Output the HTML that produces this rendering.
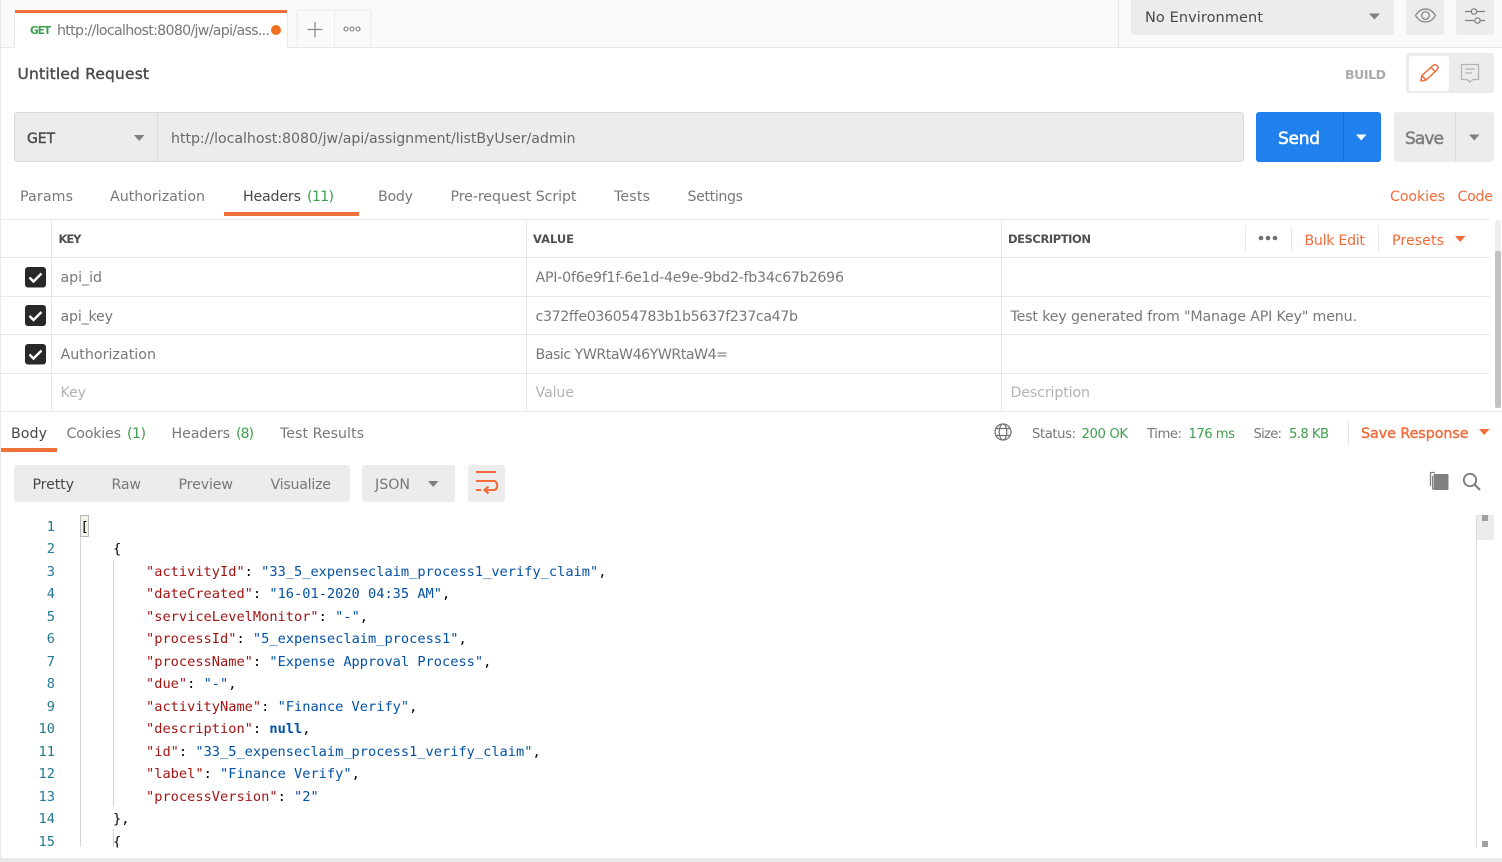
<!DOCTYPE html>
<html><head><meta charset="utf-8"><title>Untitled Request</title>
<style>
html,body{margin:0;padding:0;width:1502px;height:862px;overflow:hidden;background:#fff}
svg{display:block}
text{font-family:"DejaVu Sans","Liberation Sans",sans-serif;font-size:14.2px;fill:#787878;white-space:pre}
.d{fill:#484848}.o{fill:#f26b3a}.g{fill:#3f9f4f}.p{fill:#b3b3b3}
.s{stroke-width:.4px;stroke:currentColor}
.h{font-size:11.5px;font-weight:bold;fill:#505050}
.m{font-family:"DejaVu Sans Mono","Liberation Mono",monospace;font-size:13.67px;fill:#000}
.m tspan.k{fill:#a31515}.m tspan.v{fill:#0451a5}.m tspan.b{fill:#0451a5;font-weight:bold}
.n{font-family:"DejaVu Sans Mono","Liberation Mono",monospace;font-size:13.67px;fill:#237893;text-anchor:end}
.l{stroke:#e8e8e8;stroke-width:1;fill:none}
.ic{fill:none;stroke:#808080;stroke-width:1.2}
</style></head><body>
<svg width="1502" height="862" viewBox="0 0 1502 862" xmlns="http://www.w3.org/2000/svg">
<!-- top bar -->
<rect x="0" y="0" width="1502" height="47" fill="#fafafa"/>
<path class="l" d="M0 47.5H1502M0.5 0V858M1118.5 0V47"/>
<rect x="15" y="10" width="272" height="38" fill="#fff"/>
<rect x="15" y="10" width="272" height="3" fill="#f0703a"/>
<path class="l" d="M287.5 13V47M14.5 13V47"/>
<text x="30" y="34" textLength="21" style="font-size:10.5px;font-weight:bold;fill:#3f9f4f">GET</text>
<text x="57" y="35" textLength="213">http://localhost:8080/jw/api/ass...</text>
<circle cx="276" cy="30" r="5" fill="#f0701f"/>
<path d="M297 47V13a3 3 0 0 1 3-3H368a3 3 0 0 1 3 3V47" fill="#fafafa" stroke="#ececec"/>
<path d="M334.500 10V47" stroke="#ececec"/>
<path d="M307.500 29.500H322.500M315 22V37" stroke="#8a8a8a" stroke-width="1.300" fill="none"/>
<g fill="none" stroke="#808080" stroke-width="1.100"><circle cx="346" cy="29" r="2"/><circle cx="352" cy="29" r="2"/><circle cx="358" cy="29" r="2"/></g>
<rect x="1131" y="-4" width="263" height="39" rx="3" fill="#ececec"/>
<text x="1145" y="22" textLength="118" class="d" style="font-size:14.500px">No Environment</text>
<path d="M1369 13.500H1380L1374.500 19.500Z" fill="#808080"/>
<rect x="1406" y="-4" width="38" height="39" rx="3" fill="#ececec"/>
<rect x="1456" y="-4" width="38" height="39" rx="3" fill="#ececec"/>
<path class="ic" d="M1415.500 15.500C1418.500 10.500 1422 9 1425.500 9S1432.500 10.500 1435.500 15.500C1432.500 20.500 1429 22 1425.500 22S1418.500 20.500 1415.500 15.500Z"/>
<circle class="ic" cx="1425.500" cy="15.500" r="3.800"/>
<g class="ic"><path d="M1465 11.500H1471M1477 11.500H1485M1465 20.500H1474M1480 20.500H1485"/><circle cx="1474" cy="11.500" r="2.700"/><circle cx="1477.500" cy="20.500" r="2.700"/></g>
<!-- title -->
<text x="17.500" y="79" textLength="131.500" class="d s" style="font-size:15.500px;color:#505050">Untitled Request</text>
<text x="1345" y="79" textLength="41" style="font-size:12.500px;font-weight:bold;fill:#ababab">BUILD</text>
<rect x="1406" y="53" width="88" height="40" rx="3" fill="#ececec"/>
<rect x="1409" y="56" width="40" height="35" rx="3" fill="#fff"/>
<path d="M1421 81L1421.800 75.500L1433 65.500C1434.500 64 1436.500 65 1437.500 66.200C1438.300 67.400 1438.300 68.500 1437 70L1426 80ZM1431 67.500L1435.500 72M1421.800 75.500L1426 80" fill="none" stroke="#f26b3a" stroke-width="1.500" stroke-linejoin="round"/>
<path d="M1461.500 64.500H1478.500V79.500H1473L1470 82L1467 79.500H1461.500Z" fill="none" stroke="#b3b3b3" stroke-width="1.300"/>
<path d="M1465 69H1475M1465 73H1472" fill="none" stroke="#b3b3b3" stroke-width="1.200"/>
<!-- url bar -->
<rect x="14.500" y="112.500" width="1229" height="49" rx="3" fill="#ececec" stroke="#d9d9d9"/>
<path d="M157.500 113V161" stroke="#d9d9d9"/>
<text x="27" y="143" textLength="28" class="d s" style="color:#505050;font-size:14px">GET</text>
<path d="M134 135H144.500L139.200 141Z" fill="#808080"/>
<text x="171" y="143" textLength="404.500" style="fill:#686868">http://localhost:8080/jw/api/assignment/listByUser/admin</text>
<rect x="1256" y="112" width="125" height="50" rx="3" fill="#2080ee"/>
<path d="M1343.500 112V162" stroke="#1a70d4"/>
<text x="1278" y="144" textLength="42" style="font-size:17px;fill:#fff;stroke:#fff;stroke-width:.55px">Send</text>
<path d="M1356 134.500H1366.500L1361.200 140.500Z" fill="#fff"/>
<rect x="1394" y="112" width="100" height="50" rx="3" fill="#ececec"/>
<path d="M1455.500 112V162" stroke="#dcdcdc"/>
<text x="1405" y="144" textLength="39" style="font-size:17px;fill:#808080;stroke:#808080;stroke-width:.55px">Save</text>
<path d="M1469 134.500H1479.500L1474.200 140.500Z" fill="#808080"/>
<!-- request tabs -->
<text x="20" y="201" textLength="53">Params</text>
<text x="110" y="201" textLength="95">Authorization</text>
<text x="243" y="201" textLength="58" class="d">Headers</text>
<text x="307" y="201" textLength="27" class="g">(11)</text>
<text x="378" y="201" textLength="35">Body</text>
<text x="450.500" y="201" textLength="126">Pre-request Script</text>
<text x="614" y="201" textLength="36">Tests</text>
<text x="687.500" y="201" textLength="55.500">Settings</text>
<text x="1390" y="201" textLength="55" class="o">Cookies</text>
<text x="1457.500" y="201" textLength="35.500" class="o">Code</text>
<rect x="224" y="212" width="135" height="4" fill="#f0703a"/>
<!-- headers table -->
<path class="l" d="M0 219.500H1490M0 257.500H1490M0 296.500H1490M0 334.500H1490M0 373.500H1490M0 411.500H1502M51.500 220V411M526.500 220V411M1001.500 220V411M1245.500 226V252M1291.500 226V252M1378.500 226V252"/>
<text x="58.500" y="243" textLength="23" class="h">KEY</text>
<text x="533" y="243" textLength="41" class="h">VALUE</text>
<text x="1008" y="243" textLength="83" class="h">DESCRIPTION</text>
<g fill="#707070"><circle cx="1261" cy="238" r="2.300"/><circle cx="1268" cy="238" r="2.300"/><circle cx="1275" cy="238" r="2.300"/></g>
<text x="1304.500" y="245" textLength="60.500" class="o">Bulk Edit</text>
<text x="1392" y="245" textLength="52" class="o">Presets</text>
<path d="M1455 236H1465.500L1460.200 242Z" fill="#f26b3a"/>
<g fill="#282828"><rect x="25" y="267" width="21" height="20.500" rx="3"/><rect x="25" y="305" width="21" height="21" rx="3"/><rect x="25" y="344" width="21" height="20.500" rx="3"/></g>
<path d="M29.500 277.500L33.500 281.500L41.500 273.500M29.500 316L33.500 320L41.500 312M29.500 354.500L33.500 358.500L41.500 350.500" fill="none" stroke="#fff" stroke-width="2.400"/>
<text x="60.500" y="282" textLength="41.500">api_id</text>
<text x="535.500" y="282" textLength="308.500">API-0f6e9f1f-6e1d-4e9e-9bd2-fb34c67b2696</text>
<text x="60.500" y="321" textLength="52.500">api_key</text>
<text x="535.500" y="321" textLength="262.500">c372ffe036054783b1b5637f237ca47b</text>
<text x="1010.500" y="321" textLength="346.500">Test key generated from "Manage API Key" menu.</text>
<text x="60.500" y="359" textLength="95.500">Authorization</text>
<text x="535.500" y="359" textLength="192.500">Basic YWRtaW46YWRtaW4=</text>
<text x="60.500" y="397" textLength="25.500" class="p">Key</text>
<text x="535.500" y="397" textLength="38.500" class="p">Value</text>
<text x="1010.500" y="397" textLength="79.500" class="p">Description</text>
<rect x="1495" y="220" width="6" height="36" rx="3" fill="#eeeeee"/>
<rect x="1495" y="251" width="6" height="157" rx="2" fill="#c2c2c2"/>
<!-- response tabs -->
<text x="11" y="438" textLength="36" class="d">Body</text>
<text x="66.500" y="438" textLength="54.500">Cookies</text>
<text x="127" y="438" textLength="19" class="g">(1)</text>
<text x="171.500" y="438" textLength="58.500">Headers</text>
<text x="236" y="438" textLength="18" class="g">(8)</text>
<text x="280" y="438" textLength="84">Test Results</text>
<rect x="1" y="448" width="56" height="4" fill="#f0703a"/>
<g class="ic" style="stroke:#707070"><circle cx="1003" cy="432" r="8"/><ellipse cx="1003" cy="432" rx="3.800" ry="8"/><path d="M995.800 428.500H1010.200M995.800 435.500H1010.200"/></g>
<text x="1032" y="438" textLength="44" style="font-size:13.200px">Status:</text>
<text x="1081.500" y="438" textLength="46.500" class="g" style="font-size:13.200px">200 OK</text>
<text x="1147" y="438" textLength="35" style="font-size:13.200px">Time:</text>
<text x="1188.500" y="438" textLength="46.500" class="g" style="font-size:13.200px">176 ms</text>
<text x="1253.500" y="438" textLength="28.500" style="font-size:13.200px">Size:</text>
<text x="1289" y="438" textLength="40" class="g" style="font-size:13.200px">5.8 KB</text>
<path class="l" d="M1348.500 420V445"/>
<text x="1361" y="438" textLength="107.500" class="o s" style="color:#f26b3a">Save Response</text>
<path d="M1479 429H1489.500L1484.200 435Z" fill="#f26b3a"/>
<!-- response toolbar -->
<rect x="14" y="465" width="336" height="37" rx="3" fill="#ececec"/>
<text x="32.500" y="489" textLength="41.500" class="d">Pretty</text>
<text x="111.500" y="489" textLength="29.500">Raw</text>
<text x="178.500" y="489" textLength="54.500">Preview</text>
<text x="270.500" y="489" textLength="60.500">Visualize</text>
<rect x="362" y="465" width="93" height="37" rx="3" fill="#ececec"/>
<text x="375" y="489" textLength="35">JSON</text>
<path d="M428 481H438.500L433.200 487Z" fill="#808080"/>
<rect x="468" y="465" width="37" height="37" rx="3" fill="#ececec"/>
<path d="M476 472H496M476 481H494C498 481 498.500 490 494 490H485M488.500 486.500L484.500 490L488.500 493.500M476 490H481" fill="none" stroke="#f26b3a" stroke-width="2.100"/>
<path d="M1435 472.500H1430.500V486" fill="none" stroke="#808080" stroke-width="1.300"/>
<path d="M1432.500 476V489H1434" fill="none" stroke="#808080" stroke-width="1"/>
<rect x="1433.500" y="474" width="15" height="16" rx="1" fill="#808080"/>
<circle cx="1470" cy="480" r="6.200" fill="none" stroke="#808080" stroke-width="1.900"/>
<path d="M1474.500 484.500L1480 490" stroke="#808080" stroke-width="2.200"/>
<!-- code -->
<path d="M80.500 537V847M113.500 560V807M113.500 829V847" stroke="#d3d3d3" fill="none"/>
<rect x="80.500" y="515.500" width="8" height="21" fill="#f1f5e8" stroke="#b9b9b9"/>
<g class="n">
<text class="n" x="55" y="531">1</text>
<text class="n" x="55" y="553">2</text>
<text class="n" x="55" y="576">3</text>
<text class="n" x="55" y="598">4</text>
<text class="n" x="55" y="621">5</text>
<text class="n" x="55" y="643">6</text>
<text class="n" x="55" y="666">7</text>
<text class="n" x="55" y="688">8</text>
<text class="n" x="55" y="711">9</text>
<text class="n" x="55" y="733">10</text>
<text class="n" x="55" y="756">11</text>
<text class="n" x="55" y="778">12</text>
<text class="n" x="55" y="801">13</text>
<text class="n" x="55" y="823">14</text>
</g>
<clipPath id="c"><rect x="0" y="515" width="1476" height="332.500"/></clipPath>
<g clip-path="url(#c)">
<text class="n" x="55" y="846">15</text>
<text class="m" x="80.500" y="531">[</text>
<text class="m" x="113" y="553">{</text>
<text class="m" x="146" y="576"><tspan class="k">"activityId"</tspan>: <tspan class="v">"33_5_expenseclaim_process1_verify_claim"</tspan>,</text>
<text class="m" x="146" y="598"><tspan class="k">"dateCreated"</tspan>: <tspan class="v">"16-01-2020 04:35 AM"</tspan>,</text>
<text class="m" x="146" y="621"><tspan class="k">"serviceLevelMonitor"</tspan>: <tspan class="v">"-"</tspan>,</text>
<text class="m" x="146" y="643"><tspan class="k">"processId"</tspan>: <tspan class="v">"5_expenseclaim_process1"</tspan>,</text>
<text class="m" x="146" y="666"><tspan class="k">"processName"</tspan>: <tspan class="v">"Expense Approval Process"</tspan>,</text>
<text class="m" x="146" y="688"><tspan class="k">"due"</tspan>: <tspan class="v">"-"</tspan>,</text>
<text class="m" x="146" y="711"><tspan class="k">"activityName"</tspan>: <tspan class="v">"Finance Verify"</tspan>,</text>
<text class="m" x="146" y="733"><tspan class="k">"description"</tspan>: <tspan class="b">null</tspan>,</text>
<text class="m" x="146" y="756"><tspan class="k">"id"</tspan>: <tspan class="v">"33_5_expenseclaim_process1_verify_claim"</tspan>,</text>
<text class="m" x="146" y="778"><tspan class="k">"label"</tspan>: <tspan class="v">"Finance Verify"</tspan>,</text>
<text class="m" x="146" y="801"><tspan class="k">"processVersion"</tspan>: <tspan class="v">"2"</tspan></text>
<text class="m" x="113" y="823">},</text>
<text class="m" x="113" y="846">{</text>
</g>
<!-- code scrollbar -->
<rect x="1476" y="515" width="18" height="25" fill="#ececec"/>
<path d="M1476.500 515V847" stroke="#dedede"/>
<rect x="1482" y="515" width="6" height="6" fill="#a0a0a0"/>
<rect x="1482" y="841" width="6" height="6" fill="#a0a0a0"/>
<!-- bottom -->
<rect x="0" y="858" width="1502" height="4" fill="#e8e8e8"/>
</svg>
</body></html>
